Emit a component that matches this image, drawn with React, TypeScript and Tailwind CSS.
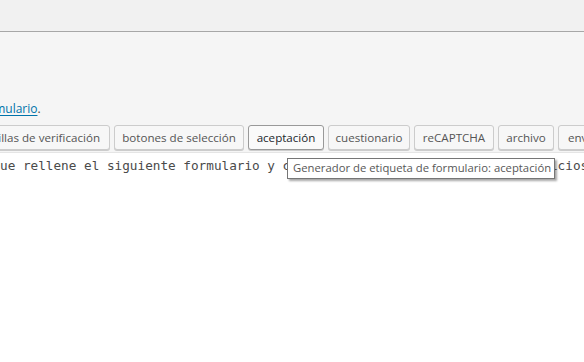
import React from "react";

const tags = [
  { label: "casillas de verificación", w: "w-[140px] justify-end pr-[9px]" },
  { label: "botones de selección", w: "w-[130px]" },
  { label: "aceptación", w: "w-[76px]", hover: true },
  { label: "cuestionario", w: "w-[82px]" },
  { label: "reCAPTCHA", w: "w-[80px]" },
  { label: "archivo", w: "w-[56px]" },
  { label: "enviar", w: "w-[60px] justify-start pl-[9px]" },
];

export default function App() {
  return (
    <div className="relative w-[584px] h-[362px] overflow-hidden bg-white font-['Open_Sans',sans-serif]">
      <div className="h-[32px] bg-[#f1f1f1] border-b border-[#a7a7a7]" />

      <div className="bg-[#f5f5f5] border-b border-[#e5e5e5] pt-[67px] pb-[2px]">
        <p className="ml-[-22px] text-[12px] leading-[19px] text-[#444] whitespace-nowrap">
          <a className="text-[#0073aa] underline underline-offset-2">formulario</a>.
        </p>
        <div className="mt-[7px] ml-[-30px] flex gap-[4px]">
          {tags.map((t) => (
            <button
              key={t.label}
              className={`${t.w} shrink-0 h-[25px] flex items-center justify-center whitespace-nowrap rounded-[3px] border text-[11.6px] shadow-[0_1px_0_#cccccc] ${
                t.hover
                  ? "bg-[#fafafa] border-[#999999] text-[#23282d]"
                  : "bg-[#f7f7f7] border-[#cccccc] text-[#555555]"
              }`}
            >
              {t.label}
            </button>
          ))}
        </div>
      </div>

      <div className="pt-[4px] ml-[-7.65px] font-['DejaVu_Sans_Mono',monospace] text-[12.7px] leading-[17px] text-[#4a4a4a] whitespace-nowrap">
        que rellene el siguiente formulario y complete los datos de nuestros servicios.
      </div>

      <div className="absolute left-[287px] top-[158px] w-[268px] h-[21px] bg-white border border-[#767676] shadow-[2px_2px_2px_rgba(0,0,0,0.35)] flex items-center pl-[5px] text-[11.3px] text-[#575757] whitespace-nowrap">
        Generador de etiqueta de formulario: aceptación
      </div>
    </div>
  );
}
